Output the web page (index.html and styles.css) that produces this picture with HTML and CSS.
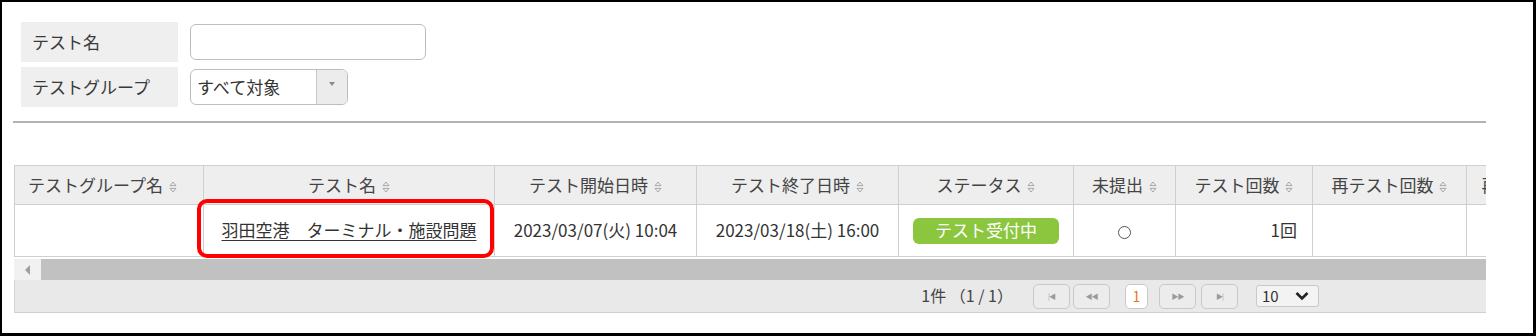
FILE: index.html
```html
<!DOCTYPE html>
<html lang="ja">
<head>
<meta charset="utf-8">
<title>テスト一覧</title>
<link rel="stylesheet" href="styles.css">
</head>
<body>
<div class="frame">
  <div class="search-form">
    <div class="form-row">
      <div class="form-label">テスト名</div>
      <div class="text-input"></div>
    </div>
    <div class="form-row">
      <div class="form-label">テストグループ</div>
      <div class="select-box">
        <span class="select-value">すべて対象</span>
        <span class="select-arrow"><span class="tri-down"></span></span>
      </div>
    </div>
  </div>
  <div class="divider"></div>
  <div class="grid">
    <div class="table-clip">
      <table class="list">
        <colgroup>
          <col class="c1"><col class="c2"><col class="c3"><col class="c4"><col class="c5"><col class="c6"><col class="c7"><col class="c8"><col class="c9">
        </colgroup>
        <thead>
          <tr>
            <th class="left">テストグループ名 <svg class="sort" viewBox="0 0 8 12" width="8" height="12"><path d="M4 1 L7 4.6 H1 Z M1 7.4 H7 L4 11 Z"/></svg></th>
            <th>テスト名 <svg class="sort" viewBox="0 0 8 12" width="8" height="12"><path d="M4 1 L7 4.6 H1 Z M1 7.4 H7 L4 11 Z"/></svg></th>
            <th>テスト開始日時 <svg class="sort" viewBox="0 0 8 12" width="8" height="12"><path d="M4 1 L7 4.6 H1 Z M1 7.4 H7 L4 11 Z"/></svg></th>
            <th>テスト終了日時 <svg class="sort" viewBox="0 0 8 12" width="8" height="12"><path d="M4 1 L7 4.6 H1 Z M1 7.4 H7 L4 11 Z"/></svg></th>
            <th>ステータス <svg class="sort" viewBox="0 0 8 12" width="8" height="12"><path d="M4 1 L7 4.6 H1 Z M1 7.4 H7 L4 11 Z"/></svg></th>
            <th>未提出 <svg class="sort" viewBox="0 0 8 12" width="8" height="12"><path d="M4 1 L7 4.6 H1 Z M1 7.4 H7 L4 11 Z"/></svg></th>
            <th>テスト回数 <svg class="sort" viewBox="0 0 8 12" width="8" height="12"><path d="M4 1 L7 4.6 H1 Z M1 7.4 H7 L4 11 Z"/></svg></th>
            <th>再テスト回数 <svg class="sort" viewBox="0 0 8 12" width="8" height="12"><path d="M4 1 L7 4.6 H1 Z M1 7.4 H7 L4 11 Z"/></svg></th>
            <th>再テスト期限 <svg class="sort" viewBox="0 0 8 12" width="8" height="12"><path d="M4 1 L7 4.6 H1 Z M1 7.4 H7 L4 11 Z"/></svg></th>
          </tr>
        </thead>
        <tbody>
          <tr>
            <td></td>
            <td><a class="test-link" href="#">羽田空港　ターミナル・施設問題</a></td>
            <td>2023/03/07(火) 10:04</td>
            <td>2023/03/18(土) 16:00</td>
            <td><span class="badge">テスト受付中</span></td>
            <td><span class="circle"></span></td>
            <td class="right">1回</td>
            <td></td>
            <td></td>
          </tr>
        </tbody>
      </table>
    </div>
    <div class="hscroll">
      <div class="hscroll-btn"><span class="tri-left"></span></div>
      <div class="hscroll-thumb"></div>
    </div>
    <div class="pager">
      <span class="pager-count">1件 （1 / 1）</span>
      <span class="pbtn first"><span class="glyph">|◀</span></span>
      <span class="pbtn prev"><span class="glyph">◀◀</span></span>
      <span class="pbtn page">1</span>
      <span class="pbtn next"><span class="glyph">▶▶</span></span>
      <span class="pbtn last"><span class="glyph">▶|</span></span>
      <span class="per-page">10 <svg class="chev" viewBox="0 0 14 10" width="14" height="10"><path d="M1.5 2 L7 7.5 L12.5 2"/></svg></span>
    </div>
    <div class="highlight"></div>
  </div>
</div>
</body>
</html>
```

FILE: styles.css
```css
html, body {
  margin: 0;
  padding: 0;
  background: #fff;
}
body {
  font-family: "Noto Sans CJK JP", "Noto Sans", sans-serif;
  color: #333;
  font-size: 17px;
  line-height: 1.2;
}
.frame {
  width: 1536px;
  height: 336px;
  box-sizing: border-box;
  border-style: solid;
  border-color: #000;
  border-width: 2px 3px 3px 2px;
  padding: 20px 0 0 12px;
  overflow: hidden;
}
.search-form {
  margin-left: 7px;
  display: flex;
  flex-direction: column;
  gap: 5px;
}
.form-row {
  display: flex;
  align-items: center;
  gap: 12px;
  height: 40px;
}
.form-label {
  width: 157px;
  height: 40px;
  box-sizing: border-box;
  background: #efefef;
  padding-left: 11px;
  display: flex;
  align-items: center;
  font-size: 17px;
  color: #3a3a3a;
}
.text-input {
  width: 236px;
  height: 36px;
  box-sizing: border-box;
  border: 1.5px solid #bdbdbd;
  border-radius: 6px;
  background: #fff;
}
.select-box {
  width: 158px;
  height: 36px;
  box-sizing: border-box;
  border: 1.5px solid #bdbdbd;
  border-radius: 6px;
  display: flex;
  overflow: hidden;
  background: #fff;
}
.select-value {
  flex: 1;
  padding-left: 6px;
  display: flex;
  align-items: center;
  font-size: 17px;
  color: #333;
}
.select-arrow {
  width: 30px;
  border-left: 1px solid #c8c8c8;
  background: #ececec;
  display: flex;
  align-items: center;
  justify-content: center;
}
.tri-down {
  width: 0;
  height: 0;
  border-left: 3.5px solid transparent;
  border-right: 3.5px solid transparent;
  border-top: 4px solid #8a8a8a;
  margin-top: -6px;
}
.divider {
  margin: 14px 0 0 -1px;
  width: 1473px;
  height: 2px;
  background: #b3b3b3;
}
.grid {
  position: relative;
  width: 1472px;
  margin-top: 42px;
}
.table-clip {
  width: 1472px;
  overflow: hidden;
}
.list {
  border-collapse: collapse;
  table-layout: fixed;
  width: 1598px;
}
.c1 { width: 189px; }
.c2 { width: 291px; }
.c3 { width: 202px; }
.c4 { width: 202px; }
.c5 { width: 175px; }
.c6 { width: 102px; }
.c7 { width: 137px; }
.c8 { width: 154px; }
.c9 { width: 146px; }
.list th {
  height: 38px;
  background: #eeeeee;
  border: 1px solid #cfcfcf;
  font-weight: normal;
  font-size: 17px;
  color: #444;
  text-align: center;
  white-space: nowrap;
  overflow: hidden;
  padding: 0;
}
.list th.left {
  text-align: left;
  padding-left: 13px;
}
.sort {
  vertical-align: -1px;
  margin-left: 2px;
}
.sort path {
  fill: none;
  stroke: #a8a8a8;
  stroke-width: 1;
}
.list td {
  height: 51px;
  border: 1px solid #cfcfcf;
  text-align: center;
  font-size: 17px;
  color: #333;
  padding: 0;
  white-space: nowrap;
  overflow: hidden;
}
.list td.right {
  text-align: right;
  padding-right: 15px;
}
.test-link {
  color: #333;
  text-decoration: underline;
  text-underline-offset: 3px;
}
.badge {
  display: inline-flex;
  align-items: center;
  justify-content: center;
  width: 146px;
  height: 26px;
  border-radius: 6px;
  background: #8cc63f;
  color: #fff;
  font-size: 17px;
}
.circle {
  display: inline-block;
  width: 11px;
  height: 11px;
  border: 1.5px solid #555;
  border-radius: 50%;
  vertical-align: middle;
}
.hscroll {
  display: flex;
  height: 21px;
  margin-top: 2px;
}
.hscroll-btn {
  width: 27px;
  background: #f1f1f1;
  display: flex;
  align-items: center;
  justify-content: center;
}
.tri-left {
  width: 0;
  height: 0;
  border-top: 5px solid transparent;
  border-bottom: 5px solid transparent;
  border-right: 5px solid #a0a0a0;
}
.hscroll-thumb {
  flex: 1;
  background: #c1c1c1;
}
.pager {
  height: 33px;
  box-sizing: border-box;
  background: #e9e9e9;
  border-left: 1px solid #d3d3d3;
  border-bottom: 1px solid #cfcfcf;
  display: flex;
  align-items: center;
  justify-content: flex-end;
  padding-right: 167px;
  font-size: 16px;
  color: #444;
}
.pager-count {
  margin-right: 20px;
  white-space: nowrap;
}
.pbtn {
  width: 37px;
  height: 25px;
  box-sizing: border-box;
  border: 1.5px solid #c9c9c9;
  border-radius: 5px;
  background: #ececec;
  display: flex;
  align-items: center;
  justify-content: center;
}
.pbtn .glyph {
  font-size: 7px;
  color: #9a9a9a;
  letter-spacing: -1px;
}
.pbtn.prev { margin-left: 3px; }
.pbtn.page {
  width: 23px;
  margin-left: 15px;
  background: #fff;
  color: #e8751a;
  font-size: 14px;
}
.pbtn.next { margin-left: 11px; }
.pbtn.last { margin-left: 5px; }
.per-page {
  margin-left: 18px;
  width: 63px;
  height: 22px;
  box-sizing: border-box;
  border: 1.5px solid #c9c9c9;
  border-radius: 3px;
  background: #f3f3f3;
  display: flex;
  align-items: center;
  justify-content: space-between;
  padding: 0 9px 0 5px;
  font-size: 15px;
  color: #333;
}
.chev path {
  fill: none;
  stroke: #222;
  stroke-width: 2.6;
}
.highlight {
  position: absolute;
  left: 183px;
  top: 34px;
  width: 297px;
  height: 59px;
  box-sizing: border-box;
  border: 4px solid #ff0000;
  border-radius: 10px;
  pointer-events: none;
}
```
